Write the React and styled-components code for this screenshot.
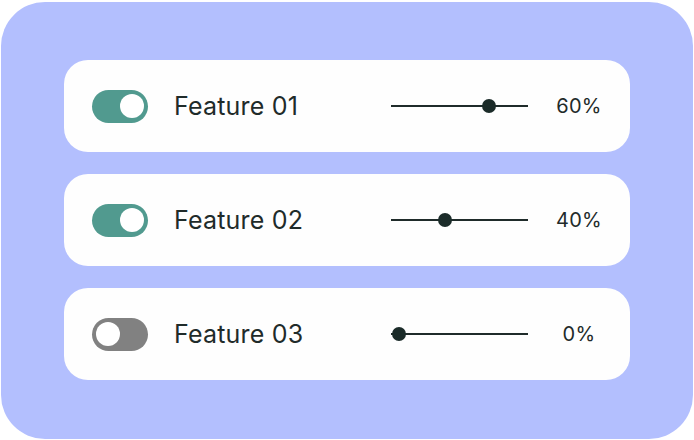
import React from 'react'
import styled, { createGlobalStyle } from 'styled-components'

const GlobalStyle = createGlobalStyle`
  body {
    margin: 0;
    background: #ffffff;
    font-family: Inter, "Noto Sans", sans-serif;
  }
`;

const Panel = styled.div`
  box-sizing: border-box;
  width: 692px;
  height: 437px;
  margin: 2px 0 0 1px;
  padding: 58px 0 0 63px;
  background: #b3bffe;
  border-radius: 44px;
  display: flex;
  flex-direction: column;
  gap: 22px;
`;

const Card = styled.div`
  box-sizing: border-box;
  width: 566px;
  height: 92px;
  padding-left: 28px;
  background: #fefefe;
  border-radius: 24px;
  display: grid;
  grid-template-columns: 56px 243px 137px 1fr;
  align-items: center;
`;

const Toggle = styled.div`
  width: 56px;
  height: 33px;
  border-radius: 17px;
  background: ${p => (p.$on ? '#519a8f' : '#818181')};
  display: flex;
  align-items: center;
  justify-content: ${p => (p.$on ? 'flex-end' : 'flex-start')};
  padding: 0 4px;
  box-sizing: border-box;
`;

const Knob = styled.div`
  width: 24px;
  height: 24px;
  border-radius: 50%;
  background: #ffffff;
`;

const Label = styled.div`
  padding-left: 26px;
  font-size: 25px;
  font-weight: 400;
  letter-spacing: 0.2px;
  color: #1f2b2a;
`;

const Track = styled.div`
  position: relative;
  height: 1.5px;
  background: #1f2b2a;
`;

const Thumb = styled.div`
  position: absolute;
  top: 50%;
  width: 14px;
  height: 14px;
  margin: -7px 0 0 -7px;
  border-radius: 50%;
  background: #1b2b29;
`;

const Value = styled.div`
  text-align: center;
  font-size: 20px;
  font-weight: 400;
  letter-spacing: 0.3px;
  color: #1f2b2a;
`;

const features = [
  { name: 'Feature 01', on: true, value: 60, thumb: 98 },
  { name: 'Feature 02', on: true, value: 40, thumb: 54 },
  { name: 'Feature 03', on: false, value: 0, thumb: 8 },
];

export default function App() {
  return (
    <>
      <GlobalStyle />
      <Panel>
        {features.map(f => (
          <Card key={f.name}>
            <Toggle $on={f.on}>
              <Knob />
            </Toggle>
            <Label>{f.name}</Label>
            <Track>
              <Thumb style={{ left: f.thumb }} />
            </Track>
            <Value>{f.value}%</Value>
          </Card>
        ))}
      </Panel>
    </>
  )
}
